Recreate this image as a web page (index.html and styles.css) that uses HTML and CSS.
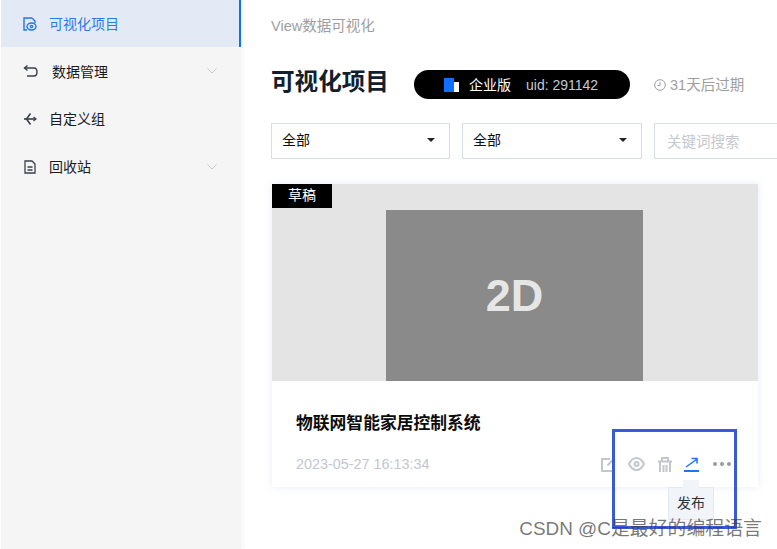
FILE: index.html
```html
<!DOCTYPE html>
<html lang="zh-CN">
<head>
    <meta charset="UTF-8" />
    <title>可视化项目</title>
    <link rel="stylesheet" href="styles.css">
</head>
<body>

<aside class="sidebar">
    <div class="menu-item active">
        <svg class="menu-icon" viewBox="0 0 14 14" fill="none" stroke="currentColor"><path d="M9 1H1v12h3" stroke-width="1.4"/><path d="M9 1l3 3v2" stroke-width="1.4"/><ellipse cx="8.500" cy="9.500" rx="4.500" ry="3.500" stroke-width="1.4"/><circle cx="8.500" cy="9.500" r="1.200" stroke-width="1.2"/></svg>
        <span>可视化项目</span>
    </div>
    <div class="menu-item">
        <svg class="menu-icon menu-icon-back" viewBox="0 0 15 12" fill="none" stroke="currentColor" stroke-width="1.4"><path d="M4.500 .5L1.500 3l3 2.500"/><path d="M1.500 3H11q3 0 3 4t-3 4H4"/></svg>
        <span>数据管理</span>
        <svg class="chevron" viewBox="0 0 10 6" fill="none" stroke="currentColor"><path d="M.5.5L5 5 9.500.5"/></svg>
    </div>
    <div class="menu-item">
        <svg class="menu-icon" viewBox="0 0 14 14" fill="none" stroke="currentColor" stroke-width="1.6"><path d="M1 7h12"/><path d="M7.500 1.500L3.500 7l4 5.500"/><path d="M10.500 5L13 7l-2.500 2" stroke-width="1.2"/></svg>
        <span>自定义组</span>
    </div>
    <div class="menu-item">
        <svg class="menu-icon" viewBox="0 0 14 14" fill="none" stroke="currentColor" stroke-width="1.3"><path d="M2 1h7l3 3v9H2z"/><path d="M4.500 7h5M4.500 10h5"/></svg>
        <span>回收站</span>
        <svg class="chevron" viewBox="0 0 10 6" fill="none" stroke="currentColor"><path d="M.5.5L5 5 9.500.5"/></svg>
    </div>
</aside>

<main class="content">
    <div class="breadcrumb">View数据可视化</div>

    <div class="title-row">
        <h1>可视化项目</h1>
        <div class="plan-badge">
            <span class="plan-logo"><i></i><b></b></span>
            <span class="plan-name">企业版</span>
            <span class="plan-uid">uid: 291142</span>
        </div>
        <div class="expire">
            <svg viewBox="0 0 12 12" fill="none" stroke="currentColor"><circle cx="6" cy="6" r="5.300"/><path d="M6 2.800V6.500H3.500"/></svg>
            <span>31天后过期</span>
        </div>
    </div>

    <div class="filters">
        <div class="select"><span>全部</span><i class="caret"></i></div>
        <div class="select"><span>全部</span><i class="caret"></i></div>
        <div class="search">关键词搜索</div>
    </div>

    <div class="card">
        <div class="cover">
            <span class="draft-tag">草稿</span>
            <div class="thumb">2D</div>
        </div>
        <div class="card-body">
            <h2>物联网智能家居控制系统</h2>
            <div class="card-foot">
                <span class="date">2023-05-27 16:13:34</span>
                <div class="actions">
                    <svg class="act" viewBox="0 0 14 15" fill="none" stroke="currentColor" stroke-width="2"><path d="M9 2H1v12h12V7"/><path d="M13 1.500L6.500 8.500"/></svg>
                    <svg class="act act-eye" viewBox="0 0 17 14" fill="none" stroke="currentColor" stroke-width="2"><path d="M1 7q3-6 7.500-6T16 7q-3 6-7.500 6T1 7z"/><circle cx="8.500" cy="7" r="2"/></svg>
                    <svg class="act" viewBox="0 0 14 15" fill="none" stroke="currentColor" stroke-width="2"><path d="M0 4.500h14M4 4.500V1h6v3.500"/><path d="M2 4.500V15M12 4.500V15M5.500 8v7M8.500 8v7"/></svg>
                    <svg class="act act-on" viewBox="0 0 15 15" fill="none" stroke="currentColor"><path d="M2 10L12.500 2.500M7.500 1.500h5.500v5" stroke-width="1.500"/><path d="M0 14h15" stroke-width="2"/></svg>
                    <svg class="act act-more" viewBox="0 0 18 4" fill="currentColor"><circle cx="2" cy="2" r="2"/><circle cx="9" cy="2" r="2"/><circle cx="16" cy="2" r="2"/></svg>
                </div>
            </div>
        </div>
    </div>
</main>

<!-- tooltip, markup box and watermark lie on top of the page -->
<div class="tooltip">发布</div>
<div class="mark-box"></div>
<div class="watermark">CSDN @C是最好的编程语言</div>

</body>
</html>
```

FILE: styles.css
```css
* { box-sizing: border-box; }
html, body { height: 100%; }
body {
  margin: 0;
  display: flex;
  height: 549px;
  overflow: hidden;
  position: relative;
  background: #fff;
  font-family: "Liberation Sans", "Noto Sans CJK SC", sans-serif;
  color: #0b0b0b;
}

.sidebar {
  width: 240px;
  margin-left: 1px;
  flex: none;
  background: #f5f5f5;
  box-shadow: 3px 0 3px rgba(0,0,0,0.03);
  font-size: 14px;
}
.menu-item {
  height: 48px;
  display: flex;
  align-items: center;
  padding-left: 22px;
  color: #1a1a1a;
}
.menu-item span { margin-bottom: 2px; }
.menu-item:nth-child(2) span { margin-bottom: 0; }
.menu-item.active {
  height: 47px;
  background: #e3eaf6;
  border-right: 2px solid #0f6fff;
  color: #2a79f0;
}
.menu-icon { width: 14px; height: 14px; margin-right: 12px; flex: none; color: #3a3f4a; }
.active .menu-icon { color: #1f74f5; }
.menu-icon-back { width: 15px; height: 12px; margin-right: 14px; }
.chevron { width: 10px; height: 6px; margin-left: auto; margin-right: 24px; color: #c9c9c9; }

.content {
  flex: 1;
  min-width: 0;
  padding: 17px 0 0 30px;
}
.breadcrumb { font-size: 14.500px; line-height: 18px; color: #9e9e9e; }

.title-row {
  display: flex;
  align-items: center;
  margin-top: 35px;
  height: 29px;
}
h1 {
  margin: 0 0 5px;
  width: 143px;
  font-size: 23.600px;
  line-height: 30px;
  font-weight: 700;
  color: #12202e;
  white-space: nowrap;
}
.plan-badge {
  width: 216px;
  height: 29px;
  border-radius: 15px;
  background: #000;
  display: flex;
  align-items: center;
  padding-left: 30px;
  font-size: 14px;
}
.plan-logo { display: flex; align-items: flex-end; height: 14px; margin-right: 10px; }
.plan-logo i { width: 10px; height: 14px; background: #0f6fff; }
.plan-logo b { width: 5px; height: 10px; background: #fff; }
.plan-name { color: #fff; margin-right: 15px; margin-bottom: 2px; }
.plan-uid { color: #c5cad3; }
.expire {
  display: flex;
  align-items: center;
  margin-left: 24px;
  font-size: 14.500px;
  color: #9e9e9e;
  white-space: nowrap;
}
.expire svg { width: 12px; height: 12px; margin-right: 4px; }
.expire span { margin-bottom: 2px; }

.filters { display: flex; gap: 12px; margin-top: 24px; }
.select, .search {
  height: 36px;
  border: 1px solid #d8dde6;
  display: flex;
  align-items: center;
  padding: 0 10px;
  font-size: 14px;
}
.select { width: 179px; flex: none; justify-content: space-between; padding-right: 14px; }
.select:nth-child(2) { width: 180px; }
.select span { margin-bottom: 4px; }
.search { flex: 1; border-right: none; padding: 0 0 2px 12px; font-size: 14.500px; color: #c5c8ce; }
.caret {
  width: 0;
  height: 0;
  margin-bottom: 2px;
  border-left: 4px solid transparent;
  border-right: 4px solid transparent;
  border-top: 4px solid #222;
}

.card {
  width: 486px;
  margin-top: 25px;
  margin-left: 1px;
  background: #fff;
  box-shadow: 0 0 8px rgba(190,200,220,0.35);
}
.cover {
  position: relative;
  height: 197px;
  background: #e4e4e4;
  display: flex;
  flex-direction: column;
  align-items: center;
  justify-content: flex-end;
}
.draft-tag {
  position: absolute;
  left: 0;
  top: 0;
  width: 60px;
  height: 24px;
  background: #000;
  color: #fff;
  font-size: 14px;
  line-height: 23px;
  text-align: center;
}
.thumb {
  width: 257px;
  height: 171px;
  margin-right: 1px;
  background: #8a8a8a;
  color: #e6e6e6;
  font-size: 45px;
  font-weight: 700;
  display: flex;
  align-items: center;
  justify-content: center;
}
.card-body { height: 106px; padding: 31px 27px 0 24px; }
h2 { margin: 0; font-size: 16.800px; line-height: 24px; font-weight: 700; color: #0b0b0b; }
.card-foot {
  display: flex;
  align-items: center;
  justify-content: space-between;
  margin-top: 18px;
  height: 20px;
}
.date { font-size: 14.400px; color: #c3c7ce; }
.actions { display: flex; align-items: center; gap: 13px; color: #c3c6cc; }
.act { width: 14px; height: 15px; }
.act-eye { width: 17px; height: 14px; }
.act-on { width: 15px; height: 15px; margin-left: -1px; margin-right: 1px; color: #1f74f5; }
.act-more { width: 18px; height: 4px; color: #9b9b9b; }

.tooltip {
  position: absolute;
  left: 668px;
  top: 487px;
  width: 46px;
  height: 33px;
  background: #f1f4f9;
  border: 1px solid #e4e8ef;
  font-size: 14px;
  line-height: 31px;
  text-align: center;
  color: #28303c;
}
.tooltip::before {
  content: "";
  position: absolute;
  left: 14px;
  top: -8px;
  width: 16px;
  height: 8px;
  background: #f1f4f9;
}
.mark-box {
  position: absolute;
  left: 612px;
  top: 429px;
  width: 125px;
  height: 100px;
  border: 3px solid #3a5bd9;
}
.watermark {
  position: absolute;
  right: 15px;
  top: 518px;
  font-size: 18.900px;
  line-height: 22px;
  color: rgba(60,60,60,0.7);
  white-space: nowrap;
}
```
